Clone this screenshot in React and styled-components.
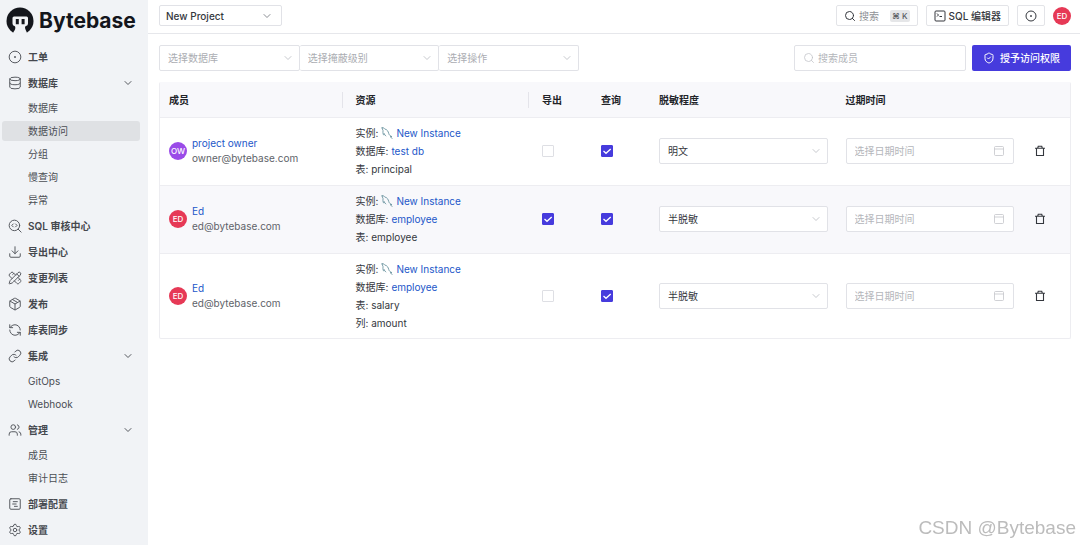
import { useState } from 'react';
import styled, { createGlobalStyle, css } from 'styled-components';
import {
    ChevronDown,
    Database,
    Download,
    Link,
    Package,
    PencilRuler,
    RefreshCcw,
    Search,
    Settings,
    ShieldCheck,
    SquareChartGantt,
    Users,
} from 'lucide-react';

const GlobalStyle = createGlobalStyle`
    *, *::before, *::after {
        box-sizing: border-box;
    }
    body {
        margin: 0;
        background: #fff;
        color: #34373d;
        font-family: Inter, 'Noto Sans CJK SC', sans-serif;
        font-size: 10px;
        line-height: 16px;
    }
    button, input, select {
        margin: 0;
        font: inherit;
        color: inherit;
    }
    button {
        padding: 0;
        border: 0;
        background: none;
        cursor: pointer;
    }
    a {
        color: #2357c9;
        text-decoration: none;
    }
    svg {
        display: block;
        flex: none;
    }
`;

const IssueIcon = ({ size = 14, ...rest }) => (
    <svg width={size} height={size} viewBox='0 0 24 24' fill='none' stroke='currentColor' strokeWidth='1.7' {...rest}>
        <circle cx='12' cy='12' r='10' />
        <circle cx='12' cy='12' r='1' fill='currentColor' />
    </svg>
);

const SearchCodeIcon = ({ size = 14, ...rest }) => (
    <svg
        width={size}
        height={size}
        viewBox='0 0 24 24'
        fill='none'
        stroke='currentColor'
        strokeWidth='1.7'
        strokeLinecap='round'
        strokeLinejoin='round'
        {...rest}
    >
        <circle cx='11' cy='11' r='9' />
        <path d='m17.5 17.5 5 5M9 8.5 6.5 11 9 13.5M13 8.5l2.5 2.5-2.5 2.5' />
    </svg>
);

const TerminalIcon = () => (
    <svg width='12' height='12' viewBox='0 0 24 24' fill='none' stroke='currentColor' strokeWidth='2'>
        <rect x='2' y='2' width='20' height='20' rx='2' />
        <path d='m6 7 3 3-3 3M11 13h5' />
    </svg>
);

const MysqlIcon = () => (
    <svg width='12' height='12' viewBox='0 0 24 24' fill='none' stroke='#4d7f8c' strokeWidth='1.5' strokeLinecap='round'>
        <path d='M2 1.5C4 .5 6 2 7.5 4c5 1 7 5 8 9 .8 3 3 5 6 6l-3 .5 4 3.5' />
        <path d='M2 1.5c0 2 1.5 3.500 2 5.500 0 3-.5 6 .5 8 .8 1.500 1.500-.5 1.800-2 .7 2 1.700 4 3.200 5' />
    </svg>
);

const TrashIcon = () => (
    <svg width='12' height='12' viewBox='0 0 24 24' fill='none' stroke='currentColor' strokeWidth='2.2'>
        <path d='M2 6.500h20M7.500 6l1-3.500h7l1 3.500M5 6.500V21h14V6.500' />
    </svg>
);

const CalendarIcon = () => (
    <svg width='12' height='12' viewBox='0 0 24 24' fill='none' stroke='currentColor' strokeWidth='1.5'>
        <rect x='3' y='3' width='18' height='18' rx='2' />
        <path d='M3 8h18' />
    </svg>
);

const LogoMark = () => (
    <svg width='28' height='28' viewBox='0 0 28 28'>
        <circle cx='14' cy='14' r='13.5' fill='#14161c' />
        <path
            fill='#f1f3f6'
            d='M6.500 11q0-1.500 1.500-1.500h12.500q1.500 0 1.500 1.500v5.500q0 2-2 2.500c-1.500.5-1 2-.5 3.500s1.500 2.500 1.500 4L17 28h-6l-4-1.500c0-1.500 1.500-2.500 2-4s.5-3-.5-3.500q-2-.5-2-2.500z'
        />
        <path fill='#14161c' d='M9.800 12h3v5.200h-3zM15.600 12h3v5.200h-3z' />
    </svg>
);

const menu = [
    { label: '工单', icon: IssueIcon },
    { label: '数据库', icon: Database, items: ['数据库', '数据访问', '分组', '慢查询', '异常'] },
    { label: 'SQL 审核中心', icon: SearchCodeIcon },
    { label: '导出中心', icon: Download },
    { label: '变更列表', icon: PencilRuler },
    { label: '发布', icon: Package },
    { label: '库表同步', icon: RefreshCcw },
    { label: '集成', icon: Link, items: ['GitOps', 'Webhook'] },
    { label: '管理', icon: Users, items: ['成员', '审计日志'] },
    { label: '部署配置', icon: SquareChartGantt },
    { label: '设置', icon: Settings },
];

const grants = [
    {
        id: 1,
        user: 'project owner',
        email: 'owner@bytebase.com',
        initials: 'OW',
        color: '#9a4be8',
        database: 'test db',
        details: ['表: principal'],
        canExport: false,
        canQuery: true,
        level: '明文',
    },
    {
        id: 2,
        user: 'Ed',
        email: 'ed@bytebase.com',
        initials: 'ED',
        color: '#e63956',
        database: 'employee',
        details: ['表: employee'],
        canExport: true,
        canQuery: true,
        level: '半脱敏',
    },
    {
        id: 3,
        user: 'Ed',
        email: 'ed@bytebase.com',
        initials: 'ED',
        color: '#e63956',
        database: 'employee',
        details: ['表: salary', '列: amount'],
        canExport: false,
        canQuery: true,
        level: '半脱敏',
    },
];

const Sidebar = () => {
    const [active, setActive] = useState('数据访问');
    const [closed, setClosed] = useState({});

    return (
        <Aside>
            <Brand href='#'>
                <LogoMark />
                Bytebase
            </Brand>
            <nav>
                {menu.map(({ label, icon: Icon, items }) => (
                    <Group key={label}>
                        {items ? (
                            <MenuToggle
                                aria-expanded={!closed[label]}
                                onClick={() => setClosed({ ...closed, [label]: !closed[label] })}
                            >
                                <Icon size={14} strokeWidth={1.7} />
                                <span>{label}</span>
                                <ChevronDown size={12} />
                            </MenuToggle>
                        ) : (
                            <MenuLink href='#'>
                                <Icon size={14} strokeWidth={1.7} />
                                <span>{label}</span>
                            </MenuLink>
                        )}
                        {items && !closed[label] && (
                            <SubMenu>
                                {items.map((item) => (
                                    <SubLink key={item} href='#' $active={item === active} onClick={() => setActive(item)}>
                                        {item}
                                    </SubLink>
                                ))}
                            </SubMenu>
                        )}
                    </Group>
                ))}
            </nav>
        </Aside>
    );
};

const SelectBox = ({ label, placeholder, options, ...rest }) => {
    const [value, setValue] = useState(placeholder ? '' : options[0]);

    return (
        <SelectWrap {...rest}>
            <select aria-label={label} value={value} onChange={(e) => setValue(e.target.value)} data-empty={!value}>
                {placeholder && <option value=''>{placeholder}</option>}
                {options.map((option) => (
                    <option key={option}>{option}</option>
                ))}
            </select>
            <ChevronDown size={12} strokeWidth={1.8} />
        </SelectWrap>
    );
};

const Tick = ({ label, checked }) => (
    <TickBox>
        <input type='checkbox' aria-label={label} defaultChecked={checked} />
        <svg width='12' height='12' viewBox='0 0 12 12' fill='none' stroke='#fff' strokeWidth='1.3'>
            <path d='m2.500 6 2.500 2.300L9.700 4' />
        </svg>
    </TickBox>
);

const GrantRow = ({ grant }) => (
    <tr>
        <td>
            <Member>
                <Avatar $color={grant.color}>{grant.initials}</Avatar>
                <div>
                    <a href='#'>{grant.user}</a>
                    <Email>{grant.email}</Email>
                </div>
            </Member>
        </td>
        <td>
            <Line>
                实例: <MysqlIcon /> <a href='#'>New Instance</a>
            </Line>
            <Line>
                数据库: <a href='#'>{grant.database}</a>
            </Line>
            {grant.details.map((detail) => (
                <Line key={detail}>{detail}</Line>
            ))}
        </td>
        <td>
            <Tick label='导出' checked={grant.canExport} />
        </td>
        <td>
            <Tick label='查询' checked={grant.canQuery} />
        </td>
        <td>
            <SelectBox label='脱敏程度' options={[grant.level, grant.level === '明文' ? '半脱敏' : '明文']} />
        </td>
        <td>
            <Field>
                <input type='text' aria-label='过期时间' placeholder='选择日期时间' />
                <CalendarIcon />
            </Field>
        </td>
        <td>
            <DeleteButton aria-label='删除'>
                <TrashIcon />
            </DeleteButton>
        </td>
    </tr>
);

const App = () => {
    return (
        <Page>
            <GlobalStyle />
            <Sidebar />
            <Main>
                <TopBar>
                    <ProjectSelect label='项目' options={['New Project']} />
                    <Actions>
                        <TopButton>
                            <Search size={12} />
                            <Muted>搜索</Muted>
                            <Shortcut>⌘ K</Shortcut>
                        </TopButton>
                        <TopButton>
                            <TerminalIcon />
                            SQL 编辑器
                        </TopButton>
                        <TopButton aria-label='工单'>
                            <IssueIcon size={12} strokeWidth={2} />
                        </TopButton>
                        <Avatar $color='#e63956'>ED</Avatar>
                    </Actions>
                </TopBar>
                <Content>
                    <Toolbar>
                        <Filters>
                            <SelectBox label='数据库' placeholder='选择数据库' options={['test db', 'employee']} />
                            <SelectBox label='掩蔽级别' placeholder='选择掩蔽级别' options={['明文', '半脱敏']} />
                            <SelectBox label='操作' placeholder='选择操作' options={['导出', '查询']} />
                        </Filters>
                        <SearchField>
                            <Search size={12} strokeWidth={1.5} />
                            <input type='text' aria-label='搜索成员' placeholder='搜索成员' />
                        </SearchField>
                        <PrimaryButton>
                            <ShieldCheck size={12} />
                            授予访问权限
                        </PrimaryButton>
                    </Toolbar>
                    <TableFrame>
                        <Table>
                            <colgroup>
                                <col />
                                <col />
                                <col width='59' />
                                <col width='58' />
                                <col />
                                <col />
                                <col width='47' />
                            </colgroup>
                            <thead>
                                <tr>
                                    <Th $divider>成员</Th>
                                    <Th $divider>资源</Th>
                                    <Th>导出</Th>
                                    <Th>查询</Th>
                                    <Th>脱敏程度</Th>
                                    <Th>过期时间</Th>
                                    <Th aria-label='操作' />
                                </tr>
                            </thead>
                            <tbody>
                                {grants.map((grant) => (
                                    <GrantRow key={grant.id} grant={grant} />
                                ))}
                            </tbody>
                        </Table>
                    </TableFrame>
                </Content>
            </Main>
            <Watermark>CSDN @Bytebase</Watermark>
        </Page>
    );
};

const Page = styled.div`
    display: flex;
    min-height: 100vh;
`;

const Aside = styled.aside`
    width: 148px;
    flex: none;
    background: #f1f3f6;
`;

const Brand = styled.a`
    display: flex;
    align-items: center;
    gap: 5px;
    height: 44px;
    padding: 0 0 2px 6px;
    color: #14161c;
    font-size: 21px;
    font-weight: 700;
`;

const Group = styled.div`
    display: flex;
    flex-direction: column;
`;

const menuItem = css`
    display: flex;
    align-items: center;
    gap: 6px;
    height: 26px;
    padding: 0 14px 0 8px;
    color: #45484e;
    font-weight: 600;
    text-align: left;

    span {
        flex: 1;
    }
    svg {
        color: #56595f;
    }
`;

const MenuLink = styled.a`
    ${menuItem}
`;

const MenuToggle = styled.button`
    ${menuItem}
`;

const SubMenu = styled.div`
    display: flex;
    flex-direction: column;
    gap: 3px;
    padding: 2px 8px 3px 2px;
`;

const SubLink = styled.a`
    height: 20px;
    padding-left: 26px;
    border-radius: 3px;
    background: ${(props) => (props.$active ? '#dfe1e4' : 'transparent')};
    color: #4b4e54;
    line-height: 20px;
`;

const Main = styled.main`
    flex: 1;
    min-width: 0;
`;

const TopBar = styled.header`
    display: flex;
    align-items: center;
    justify-content: space-between;
    height: 34px;
    padding: 0 9px 2px 11px;
    border-bottom: 1px solid #e6e7eb;
`;

const Actions = styled.div`
    display: flex;
    align-items: center;
    gap: 8px;
`;

const TopButton = styled.button`
    display: flex;
    align-items: center;
    gap: 3px;
    height: 21px;
    padding: 0 7px;
    border: 1px solid #e3e4e8;
    border-radius: 2px;
    font-weight: 500;
`;

const Muted = styled.span`
    color: #8f9196;
    font-weight: 400;
`;

const Shortcut = styled.kbd`
    margin-left: 8px;
    padding: 0 2px;
    border-radius: 2px;
    background: #e5e6e8;
    color: #55585e;
    font: inherit;
    font-size: 8px;
    line-height: 12px;
`;

const Avatar = styled.span`
    display: flex;
    flex: none;
    align-items: center;
    justify-content: center;
    width: 18px;
    height: 18px;
    border-radius: 50%;
    background: ${(props) => props.$color};
    color: #fff;
    font-size: 8px;
    font-weight: 500;
`;

const Content = styled.div`
    padding: 11px 9px 0 11px;
`;

const Toolbar = styled.div`
    display: flex;
    gap: 6px;
    margin-bottom: 11px;
`;

const field = css`
    display: flex;
    align-items: center;
    height: 26px;
    border: 1px solid #e1e2e7;
    border-radius: 2px;
    background: #fff;

    input,
    select {
        width: 100%;
        min-width: 0;
        height: 100%;
        padding: 0 8px;
        border: 0;
        outline: 0;
        appearance: none;
        background: transparent;
    }
    input::placeholder {
        color: #b4b6bb;
        opacity: 1;
    }
    svg {
        margin-right: 8px;
        color: #c0c2c7;
    }
`;

const SelectWrap = styled.div`
    ${field}
    position: relative;

    select[data-empty='true'] {
        color: #abadb2;
    }
    svg {
        position: absolute;
        right: 5px;
        margin: 0;
        pointer-events: none;
    }
`;

const ProjectSelect = styled(SelectBox)`
    width: 123px;
    height: 21px;
    font-weight: 500;

    select {
        padding: 0 6px;
    }
    svg {
        right: 8px;
        color: #7d8087;
    }
`;

const Filters = styled.div`
    display: flex;
    width: 420px;
    margin-right: auto;

    > div {
        flex: 1;
    }
    > div + div {
        border-left: 0;
    }
`;

const Field = styled.div`
    ${field}
`;

const SearchField = styled(Field)`
    width: 172px;

    svg {
        margin: 0 0 0 8px;
    }
    input {
        padding: 0 3px;
    }
`;

const PrimaryButton = styled.button`
    display: flex;
    align-items: center;
    gap: 5px;
    height: 26px;
    padding: 0 11px;
    border-radius: 2px;
    background: #463bdd;
    color: #fff;
    font-weight: 500;
`;

const TableFrame = styled.div`
    border: solid #ededf1;
    border-width: 0 1px 1px;
    border-radius: 2px;
`;

const Table = styled.table`
    width: 100%;
    border-spacing: 0;
    table-layout: fixed;

    td {
        padding: 6px 9px 7px;
        border-bottom: 1px solid #ededf1;
    }
    tbody tr:nth-child(even) {
        background: #f8f8fb;
    }
    tbody tr:last-child td {
        padding-bottom: 6px;
        border-bottom: 0;
    }
`;

const Th = styled.th`
    position: relative;
    height: 36px;
    padding: 0 9px;
    border-bottom: 1px solid #ededf1;
    background: #f8f8fb;
    color: #222429;
    font-weight: 600;
    text-align: left;

    &::after {
        content: '';
        display: ${(props) => (props.$divider ? 'block' : 'none')};
        position: absolute;
        top: 10px;
        right: 4px;
        width: 1px;
        height: 16px;
        background: #e4e4ea;
    }
`;

const Member = styled.div`
    display: flex;
    align-items: center;
    gap: 5px;
    line-height: 15px;
`;

const Email = styled.div`
    color: #606369;
`;

const Line = styled.div`
    display: flex;
    align-items: center;
    gap: 3px;
    height: 18px;
`;

const TickBox = styled.label`
    display: grid;
    width: 12px;
    height: 12px;

    input,
    svg {
        grid-area: 1 / 1;
        width: 12px;
        height: 12px;
    }
    input {
        appearance: none;
        border: 1px solid #dedfe4;
        border-radius: 1px;
        background: #fff;
    }
    input:checked {
        border-color: #463bdd;
        background: #463bdd;
    }
    svg {
        z-index: 1;
        pointer-events: none;
    }
`;

const DeleteButton = styled.button`
    display: block;
    padding: 0 2px;
`;

const Watermark = styled.div`
    position: fixed;
    right: 4px;
    bottom: 5px;
    color: #bcbcbc;
    font-family: 'Liberation Sans', sans-serif;
    font-size: 19px;
    line-height: 24px;
    pointer-events: none;
`;

export default App;
